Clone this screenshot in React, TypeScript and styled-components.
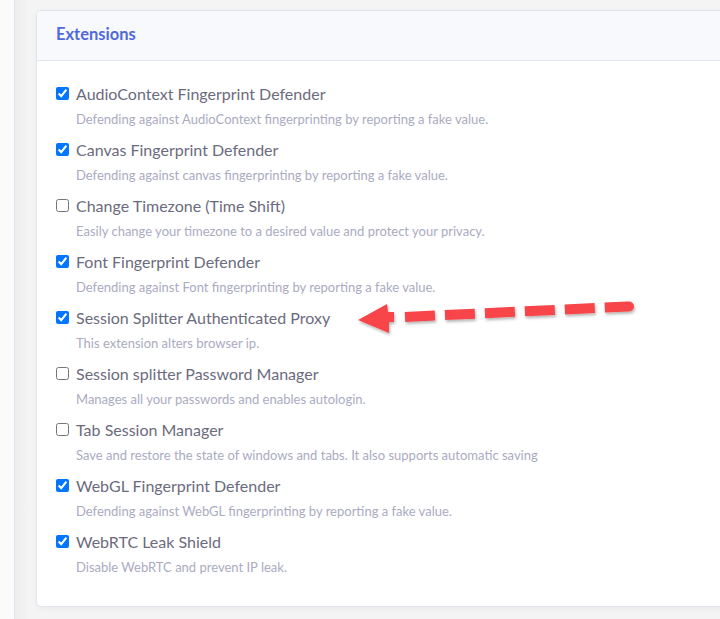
import React from "react";
import styled, { createGlobalStyle } from "styled-components";

const Global = createGlobalStyle`
  html, body { margin: 0; padding: 0; }
  body {
    background: #f3f3f5;
    font-family: Lato, "Open Sans", sans-serif;
    overflow: hidden;
    width: 720px;
    height: 619px;
  }
`;

const Page = styled.div`
  position: relative;
  display: flex;
  width: 720px;
  height: 619px;
  overflow: hidden;
`;

const Sidebar = styled.div`
  flex: 0 0 14px;
  background: #fbfbfc;
  border-right: 1px solid #e3e3ef;
`;

const Main = styled.div`
  flex: 1 1 auto;
  padding: 10px 0 0 21px;
  background: linear-gradient(90deg, #ededee 0px, #f4f4f5 12px, #f4f4f5 100%);
`;

const Card = styled.section`
  width: 720px;
  background: #ffffff;
  border: 1px solid #e3e3ee;
  border-radius: 5px;
  box-shadow: 0 2px 6px rgba(0, 0, 0, 0.04);
  overflow: hidden;
`;

const Header = styled.header`
  height: 50px;
  box-sizing: border-box;
  display: flex;
  align-items: center;
  padding: 0 0 3px 19px;
  background: #f8f9fd;
  border-bottom: 1px solid #e3e3ef;
`;

const Title = styled.h2`
  margin: 0;
  font-family: Lato, sans-serif;
  font-size: 16.5px;
  font-weight: 700;
  color: #4f68dc;
`;

const Body = styled.div`
  display: flex;
  flex-direction: column;
  gap: 10px;
  padding: 21px 19px 30px;
`;

const Row = styled.div`
  display: flex;
  flex-direction: column;
  gap: 6px;
`;

const LabelLine = styled.label`
  display: flex;
  align-items: center;
  gap: 7px;
  height: 22px;
  font-family: Lato, sans-serif;
  font-size: 16px;
  color: #6b6b7e;
`;

const Check = styled.input`
  width: 13px;
  height: 13px;
  margin: 0;
`;

const Desc = styled.div`
  padding-left: 20px;
  height: 18px;
  line-height: 18px;
  font-family: Lato, sans-serif;
  font-size: 13px;
  color: #aaabc2;
`;

const ArrowSvg = styled.svg`
  position: absolute;
  left: 0;
  top: 0;
  pointer-events: none;
`;

const items = [
  { t: "AudioContext Fingerprint Defender", d: "Defending against AudioContext fingerprinting by reporting a fake value.", c: true },
  { t: "Canvas Fingerprint Defender", d: "Defending against canvas fingerprinting by reporting a fake value.", c: true },
  { t: "Change Timezone (Time Shift)", d: "Easily change your timezone to a desired value and protect your privacy.", c: false },
  { t: "Font Fingerprint Defender", d: "Defending against Font fingerprinting by reporting a fake value.", c: true },
  { t: "Session Splitter Authenticated Proxy", d: "This extension alters browser ip.", c: true },
  { t: "Session splitter Password Manager", d: "Manages all your passwords and enables autologin.", c: false },
  { t: "Tab Session Manager", d: "Save and restore the state of windows and tabs. It also supports automatic saving", c: false },
  { t: "WebGL Fingerprint Defender", d: "Defending against WebGL fingerprinting by reporting a fake value.", c: true },
  { t: "WebRTC Leak Shield", d: "Disable WebRTC and prevent IP leak.", c: true },
];

export default function App() {
  return (
    <>
      <Global />
      <Page>
        <Sidebar />
        <Main>
          <Card>
            <Header>
              <Title>Extensions</Title>
            </Header>
            <Body>
              {items.map((it) => (
                <Row key={it.t}>
                  <LabelLine>
                    <Check type="checkbox" defaultChecked={it.c} />
                    {it.t}
                  </LabelLine>
                  <Desc>{it.d}</Desc>
                </Row>
              ))}
            </Body>
          </Card>
        </Main>
        <ArrowSvg width="720" height="619" viewBox="0 0 720 619">
          <defs>
            <filter id="sh" x="-10%" y="-50%" width="120%" height="200%">
              <feDropShadow dx="1" dy="2" stdDeviation="1.5" floodColor="#000" floodOpacity="0.3" />
            </filter>
          </defs>
          <g filter="url(#sh)" fill="#f84448" stroke="none">
            <polygon points="358,320 387,304 388,312 394,312 394,322 389,322 389,333" />
            <line x1="405" y1="317" x2="628" y2="306.5" stroke="#f84448" strokeWidth="10" strokeDasharray="30 10" />
            <circle cx="629" cy="306.5" r="5" />
          </g>
        </ArrowSvg>
      </Page>
    </>
  );
}
